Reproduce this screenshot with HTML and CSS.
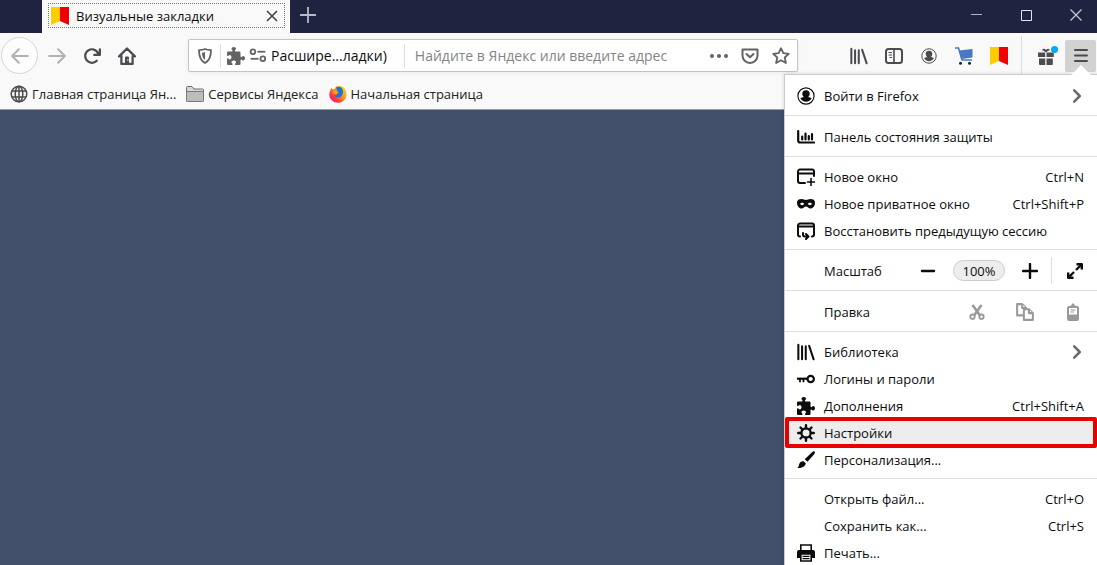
FILE: index.html
```
<!DOCTYPE html>
<html lang="ru">
<head>
    <meta charset="UTF-8">
    <title>Визуальные закладки</title>
    <link rel="stylesheet" href="styles.css">
</head>
<body>
<!-- shared icons -->
<svg class="sprite" aria-hidden="true">
    <symbol id="flag" viewBox="0 0 18 18">
        <path fill="#fc0" d="M0 0h9v14L0 18z"/>
        <path fill="#f00000" d="M9 0h9v18l-9-4z"/>
    </symbol>
    <symbol id="account" viewBox="0 0 16 16">
        <circle cx="8" cy="8" r="7.2" fill="none" stroke="currentColor"/>
        <path fill="currentColor" d="M8 2.800a3.300 3.300 0 0 0-3.300 3.300c0 1.200.5 2.200 1.300 2.800-.8.300-2 .4-3 1.200a5.600 5.600 0 0 0 10 0c-1-.8-2.200-.9-3-1.200.8-.6 1.300-1.600 1.300-2.800A3.300 3.300 0 0 0 8 2.800z"/>
    </symbol>
    <symbol id="library" viewBox="0 0 16 16">
        <path fill="none" stroke="currentColor" stroke-width="1.800" stroke-linecap="round" d="M1.200 1.500v13M4.500 3v11.500M7.800 3v11.500M10.800 2.500l4 12"/>
    </symbol>
    <symbol id="puzzle" viewBox="0 0 16 16">
        <path fill="currentColor" d="M14.5 8c-.971 0-1 1-1.75 1a.765.765 0 0 1-.75-.75V5a1 1 0 0 0-1-1H7.75A.765.765 0 0 1 7 3.25c0-.75 1-.779 1-1.75C8 .635 7.1 0 6 0S4 .635 4 1.5c0 .971 1 1 1 1.75a.765.765 0 0 1-.75.75H1a1 1 0 0 0-1 1v2.250A.765.765 0 0 0 .75 8c.75 0 .779-1 1.750-1C3.365 7 4 7.900 4 9s-.635 2-1.500 2c-.971 0-1-1-1.750-1a.765.765 0 0 0-.75.75V15a1 1 0 0 0 1 1h3.250a.765.765 0 0 0 .75-.75c0-.75-1-.779-1-1.750 0-.865.9-1.500 2-1.500s2 .635 2 1.500c0 .971-1 1-1 1.750a.765.765 0 0 0 .75.75H11a1 1 0 0 0 1-1v-3.250a.765.765 0 0 1 .75-.75c.75 0 .779 1 1.750 1 .865 0 1.500-.9 1.500-2s-.635-2-1.500-2z"/>
    </symbol>
    <symbol id="chevron" viewBox="0 0 16 16">
        <path fill="none" stroke="currentColor" stroke-width="2.200" stroke-linecap="round" stroke-linejoin="round" d="M5.500 3l5 5-5 5"/>
    </symbol>
</svg>

<header class="titlebar">
    <div class="tab">
        <div class="tab-focus">
            <svg class="icon"><use href="#flag"/></svg>
            <span class="tab-title">Визуальные закладки</span>
            <button class="tab-close" aria-label="Закрыть вкладку">
                <svg width="12" height="12" viewBox="0 0 12 12"><path stroke="#444" stroke-width="1.600" d="M1 1l10 10M11 1L1 11"/></svg>
            </button>
        </div>
    </div>
    <button class="tab-new" aria-label="Новая вкладка">
        <svg width="16" height="16" viewBox="0 0 16 16"><path stroke="#b9bac6" stroke-width="1.800" d="M8 0v16M0 8h16"/></svg>
    </button>
    <div class="win-controls">
        <button aria-label="Свернуть"><svg width="12" height="12" viewBox="0 0 12 12"><path stroke="#a9b4bd" d="M1 5.500h11"/></svg></button>
        <button aria-label="Развернуть"><svg width="12" height="12" viewBox="0 0 12 12"><path fill="none" stroke="#e4e4ea" d="M1.500 1.500h10v10h-10z"/></svg></button>
        <button aria-label="Закрыть"><svg width="12" height="12" viewBox="0 0 12 12"><path stroke="#c9c9d2" stroke-width="1.200" d="M.5.5l11 11M11.500.5l-11 11"/></svg></button>
    </div>
</header>

<nav class="toolbar">
    <button class="tool back" aria-label="Назад">
        <svg class="icon" viewBox="0 0 16 16"><path fill="none" stroke="currentColor" stroke-width="1.800" stroke-linecap="round" stroke-linejoin="round" d="M15 8H1M7 2L1 8l6 6"/></svg>
    </button>
    <button class="tool forward" aria-label="Вперёд">
        <svg class="icon" viewBox="0 0 16 16"><path fill="none" stroke="currentColor" stroke-width="1.800" stroke-linecap="round" stroke-linejoin="round" d="M1 8h14M9 2l6 6-6 6"/></svg>
    </button>
    <button class="tool" aria-label="Обновить">
        <svg class="icon" viewBox="0 0 16 16"><path fill="currentColor" d="M15 1a1 1 0 0 0-1 1v2.418A6.995 6.995 0 1 0 8 15a6.954 6.954 0 0 0 4.950-2.050 1 1 0 0 0-1.414-1.414A5.019 5.019 0 1 1 12.549 6H10a1 1 0 0 0 0 2h5a1 1 0 0 0 1-1V2a1 1 0 0 0-1-1z"/></svg>
    </button>
    <button class="tool" aria-label="Домой">
        <svg class="icon" viewBox="0 0 16 16">
            <path fill="none" stroke="currentColor" stroke-width="2" stroke-linecap="round" stroke-linejoin="round" d="M1 8.300L8 1.300l7 7M3 8v7h10V8"/>
            <path fill="currentColor" d="M6.200 15V9.500a1 1 0 0 1 1-1h1.600a1 1 0 0 1 1 1V15z"/>
            <circle cx="8.800" cy="11.500" r=".7" fill="#f9f9f9"/>
        </svg>
    </button>

    <div class="urlbar">
        <button class="url-btn shield" aria-label="Защита">
            <svg width="16" height="16" viewBox="0 0 16 16">
                <path fill="none" stroke="currentColor" stroke-width="1.800" stroke-linejoin="round" d="M8 1c2 .8 4 1 6 1.200 0 5.300-.8 10-6 12.800-5.200-2.800-6-7.500-6-12.800C4 2 6 1.800 8 1z"/>
                <path fill="currentColor" d="M8 4v8c-2.400-1.700-3-4.300-3-7.300C6.200 4.500 7 4.300 8 4z"/>
            </svg>
        </button>
        <button class="identity">
            <svg class="icon"><use href="#puzzle"/></svg>
            <svg class="icon" viewBox="0 0 16 16">
                <g fill="none" stroke="currentColor" stroke-width="1.600">
                    <circle cx="3.500" cy="4.200" r="2.100"/><path d="M7.500 4.200H14.500"/>
                    <circle cx="12.300" cy="10.500" r="2.100"/><path d="M1.500 10.500h7"/>
                </g>
            </svg>
            <span>Расшире...ладки)</span>
        </button>
        <input class="url-input" type="text" aria-label="Адресная строка" placeholder="Найдите в Яндекс или введите адрес">
        <button class="url-btn" aria-label="Действия">
            <svg class="icon" viewBox="0 0 18 18"><g fill="currentColor"><circle cx="2" cy="9" r="2"/><circle cx="9" cy="9" r="2"/><circle cx="16" cy="9" r="2"/></g></svg>
        </button>
        <button class="url-btn" aria-label="Pocket">
            <svg class="icon" viewBox="0 0 18 18">
                <g fill="none" stroke="currentColor" stroke-width="2" stroke-linecap="round" stroke-linejoin="round">
                    <path d="M1.500 2.500h15v6a7.500 7.500 0 0 1-15 0z"/><path d="M5.500 7L9 10.300 12.500 7"/>
                </g>
            </svg>
        </button>
        <button class="url-btn" aria-label="Добавить в закладки">
            <svg class="icon" viewBox="0 0 18 18"><path fill="none" stroke="currentColor" stroke-width="1.800" stroke-linejoin="round" d="M9 1.200l2.300 5 5.500.6-4.100 3.700 1.200 5.500L9 13.200 4.100 16l1.200-5.500-4.100-3.700 5.500-.6z"/></svg>
        </button>
    </div>

    <div class="tools-right">
        <button class="tool" aria-label="Библиотека"><svg class="icon"><use href="#library"/></svg></button>
        <button class="tool" aria-label="Боковые панели">
            <svg class="icon" viewBox="0 0 18 18">
                <rect x="1" y="2" width="16" height="14" rx="2.500" fill="none" stroke="currentColor" stroke-width="2"/>
                <path stroke="currentColor" stroke-width="1.600" d="M9 3v12"/>
                <path stroke="currentColor" d="M3.500 5.500H7M3.500 8H7M4.500 10.500H7"/>
            </svg>
        </button>
        <button class="tool" aria-label="Аккаунт"><svg width="16" height="16"><use href="#account"/></svg></button>
        <button class="tool" aria-label="Маркет">
            <svg class="icon" viewBox="0 0 18 18">
                <path fill="none" stroke="#4878c4" stroke-width="1.600" d="M0 1h3.500L7 13h10"/>
                <path fill="#4878c4" d="M4 3.500L17.500 2v8.500L6.500 12z"/>
                <circle cx="5.500" cy="16.300" r="1.500" fill="#222"/><circle cx="14.500" cy="16.300" r="1.500" fill="#222"/>
            </svg>
        </button>
        <button class="tool" aria-label="Визуальные закладки"><svg class="icon"><use href="#flag"/></svg></button>
    </div>
    <div class="tools-end">
        <button class="tool" aria-label="Что нового">
            <svg width="20" height="20" viewBox="0 0 20 20">
                <path fill="currentColor" d="M0 6.500h7.200V11H0zM8.500 6.500h7.300V11H8.500zM1 12.500h6.200V19H2a1 1 0 0 1-1-1zM8.500 12.500h6.300V18a1 1 0 0 1-1 1H8.500z"/>
                <path fill="none" stroke="currentColor" stroke-width="2" d="M7.900 5.800C7 3.500 5 3 5 4.500M7.900 5.800C9 4 10.500 3 11 4.500"/>
                <circle cx="16.500" cy="3.500" r="3.500" fill="#00a9f4"/>
            </svg>
        </button>
        <button class="tool menu-btn" aria-label="Открыть меню" aria-expanded="true">
            <svg class="icon" viewBox="0 0 18 18"><path stroke="currentColor" stroke-width="2" stroke-linecap="round" d="M3 3h12M3 8.500h12M3 14h12"/></svg>
        </button>
    </div>
</nav>

<div class="bookmarks">
    <a href="#">
        <svg class="icon" viewBox="0 0 18 18">
            <g fill="none" stroke="#4a4a4f" stroke-width="1.500">
                <circle cx="9" cy="9" r="7.800"/><ellipse cx="9" cy="9" rx="3.800" ry="7.800"/>
                <path d="M9 1v16M2 6h14M2 12h14"/>
            </g>
        </svg>
        Главная страница Ян...
    </a>
    <a href="#">
        <svg class="icon" viewBox="0 0 18 18">
            <path fill="#d6d6d6" stroke="#6d6d6d" stroke-linejoin="round" d="M.5 15.500v-13a1 1 0 0 1 1-1H6l2 2.500h8.500a1 1 0 0 1 1 1v10.500a1 1 0 0 1-1 1h-15a1 1 0 0 1-1-1z"/>
            <path fill="#bcbcbc" stroke="#7a7a7a" d="M.5 6.500h17v9a1 1 0 0 1-1 1h-15a1 1 0 0 1-1-1z"/>
        </svg>
        Сервисы Яндекса
    </a>
    <a href="#">
        <svg class="icon" viewBox="0 0 18 18">
            <defs>
                <linearGradient id="fire" x1="1" y1="0" x2="0" y2="1">
                    <stop offset="0" stop-color="#ffe226"/><stop offset=".4" stop-color="#ff9a1c"/>
                    <stop offset=".7" stop-color="#ff3647"/><stop offset="1" stop-color="#e31587"/>
                </linearGradient>
            </defs>
            <path fill="url(#fire)" d="M2.500 3l1 1.500L5.500 4 7 1.500C11 .3 15 1 16.500 5c1.200 2 1.300 5 .5 7.500-1.500 3.500-4.500 5.300-8 5.300C4 17.800.3 14 .3 9.500c0-2.500 1-5 2.200-6.500z"/>
            <path fill="#1477d8" d="M7 2.500c3.500-1.800 6.500.5 7 3.500.4 3.500-1.500 6.500-5 6.500C7 12.500 5.500 11.500 5 10c1.500.8 3 0 3.500-1L6 7.500l2-1.500z"/>
            <path fill="#ff9a1c" d="M4 5.500L7 4l1.500 2.500L10 7.500 7.500 9 4.500 9z"/>
        </svg>
        Начальная страница
    </a>
</div>

<main class="page"></main>

<div class="menu">
    <div class="group single">
        <button class="item">
            <svg class="icon"><use href="#account"/></svg>
            <span>Войти в Firefox</span>
            <svg class="icon arrow"><use href="#chevron"/></svg>
        </button>
    </div>
    <div class="group single">
        <button class="item">
            <svg class="icon" viewBox="0 0 18 18"><path fill="none" stroke="currentColor" stroke-width="2.200" stroke-linecap="round" d="M1.200 3v9.500a2 2 0 0 0 2 2H17M5.200 8.500v3M8.500 5.500v6M11.800 8v3.500M15 6v5.500"/></svg>
            <span>Панель состояния защиты</span>
        </button>
    </div>
    <div class="group">
        <button class="item">
            <svg class="icon" viewBox="0 0 18 18">
                <g fill="none" stroke="currentColor" stroke-width="2" stroke-linecap="round">
                    <path d="M8 15H3a2 2 0 0 1-2-2V3.500a2 2 0 0 1 2-2h12a2 2 0 0 1 2 2V8M2 5.500h14"/>
                    <path stroke-width="1.600" d="M14 10.500v7M10.500 14h7"/>
                </g>
            </svg>
            <span>Новое окно</span>
            <kbd>Ctrl+N</kbd>
        </button>
        <button class="item">
            <svg class="icon" viewBox="0 0 18 18">
                <path fill="currentColor" fill-rule="evenodd" d="M4.500 4C6.500 4 7.500 5 9 5s2.500-1 4.500-1C16 4 18 5 18 7.500c0 3.500-2 6-4.500 6-2 0-3-2-4.500-2s-2.500 2-4.500 2C2 13.500 0 11 0 7.500 0 5 2 4 4.500 4zM3 9c1 1.500 3.300 1.500 4.300 0C6.300 7.300 4 7.300 3 9zm7.700 0c1 1.500 3.300 1.500 4.300 0-1-1.700-3.300-1.700-4.300 0z"/>
            </svg>
            <span>Новое приватное окно</span>
            <kbd>Ctrl+Shift+P</kbd>
        </button>
        <button class="item">
            <svg class="icon" viewBox="0 0 18 18">
                <g fill="none" stroke="currentColor" stroke-width="2" stroke-linecap="round" stroke-linejoin="round">
                    <path d="M3 14.500a2 2 0 0 1-2-2v-9a2 2 0 0 1 2-2h12a2 2 0 0 1 2 2v9a2 2 0 0 1-2 2M2 4.500h14"/>
                    <path d="M6 11v1.500a2 2 0 0 0 2 2h3M9 12l2.500 2.500L9 17"/>
                </g>
            </svg>
            <span>Восстановить предыдущую сессию</span>
        </button>
    </div>
    <div class="group single">
        <div class="item controls">
            <span>Масштаб</span>
            <button class="zoom-btn" aria-label="Уменьшить"><svg width="16" height="16" viewBox="0 0 16 16"><path stroke="currentColor" stroke-width="2.400" stroke-linecap="round" d="M2 8h12"/></svg></button>
            <button class="zoom-value">100%</button>
            <button class="zoom-btn" aria-label="Увеличить"><svg width="16" height="16" viewBox="0 0 16 16"><path stroke="currentColor" stroke-width="2.400" stroke-linecap="round" d="M1 8h14M8 1v14"/></svg></button>
            <button class="fullscreen" aria-label="Полный экран">
                <svg width="16" height="16" viewBox="0 0 16 16">
                    <path stroke="currentColor" stroke-width="2.400" d="M9 7l5-5M7 9l-5 5"/>
                    <path fill="none" stroke="currentColor" stroke-width="2.400" stroke-linejoin="round" d="M9.500 1.200h5.300v5.300M1.200 9.500v5.300h5.300"/>
                </svg>
            </button>
        </div>
    </div>
    <div class="group single">
        <div class="item controls">
            <span>Правка</span>
            <button class="edit-btn" aria-label="Вырезать" disabled>
                <svg width="16" height="16" viewBox="0 0 16 16">
                    <g fill="none" stroke="currentColor"><circle cx="3.500" cy="12.700" r="2.200" stroke-width="1.800"/><circle cx="12.500" cy="12.700" r="2.200" stroke-width="1.800"/><path stroke-width="2.600" d="M3.500 1l7.500 10.500M12.500 1L5 11.500"/></g>
                </svg>
            </button>
            <button class="edit-btn" aria-label="Копировать" disabled>
                <svg width="18" height="18" viewBox="0 0 16 16">
                    <g fill="#fff" stroke="currentColor" stroke-width="1.800" stroke-linejoin="round"><path d="M1 1h4.500L9 4.500V11H1z"/><path d="M5.500 1v3.500H9"/><path d="M7 5.500h4.500L15 9v6H7z"/><path d="M11.500 5.500V9H15"/></g>
                </svg>
            </button>
            <button class="edit-btn" aria-label="Вставить" disabled>
                <svg width="16" height="18" viewBox="0 0 16 18">
                    <rect x="2" y="3" width="12" height="15" rx="2" fill="currentColor"/>
                    <path fill="currentColor" d="M8 0l3 3.500H5z"/>
                    <path fill="#fff" d="M4 5h8v6.500H4z"/>
                    <path stroke="currentColor" d="M5.500 7h5M5.500 9h3.500"/>
                </svg>
            </button>
        </div>
    </div>
    <div class="group">
        <button class="item">
            <svg class="icon"><use href="#library"/></svg>
            <span>Библиотека</span>
            <svg class="icon arrow"><use href="#chevron"/></svg>
        </button>
        <button class="item">
            <svg class="icon" viewBox="0 0 18 18">
                <circle cx="13.700" cy="9" r="3.200" fill="none" stroke="currentColor" stroke-width="2.200"/>
                <path fill="none" stroke="currentColor" stroke-width="2.200" d="M10.500 8.700H0"/>
                <path fill="none" stroke="currentColor" stroke-width="1.800" d="M3 8.500v3.700M6.500 8.500v3.700"/>
            </svg>
            <span>Логины и пароли</span>
        </button>
        <button class="item">
            <svg class="icon"><use href="#puzzle"/></svg>
            <span>Дополнения</span>
            <kbd>Ctrl+Shift+A</kbd>
        </button>
        <button class="item active">
            <svg class="icon" viewBox="0 0 18 18">
                <circle cx="9" cy="9" r="4.700" fill="none" stroke="currentColor" stroke-width="2.200"/>
                <path stroke="currentColor" stroke-width="2.400" stroke-linecap="round" d="M9 1.200v3M9 13.800v3M1.200 9h3M13.800 9h3M3.500 3.500l2 2M12.500 12.500l2 2M3.500 14.500l2-2M12.500 5.500l2-2"/>
            </svg>
            <span>Настройки</span>
        </button>
        <button class="item">
            <svg class="icon" viewBox="0 0 18 18"><path fill="currentColor" d="M17.500.5c.8.8.4 1.800-.3 2.700l-6.700 7.600-2.800-2.500L15 1.200c.8-.8 1.800-1.300 2.500-.7zM6.500 10.200l2.300 2.100C8.500 15.500 4.500 17.500 0 17c2-1 1.500-2 2.300-4.300.8-1.900 2.500-2.700 4.200-2.500z"/></svg>
            <span>Персонализация...</span>
        </button>
    </div>
    <div class="group">
        <button class="item"><span class="no-icon">Открыть файл...</span><kbd>Ctrl+O</kbd></button>
        <button class="item"><span class="no-icon">Сохранить как...</span><kbd>Ctrl+S</kbd></button>
        <button class="item">
            <svg class="icon" viewBox="0 0 18 18">
                <path fill="none" stroke="currentColor" stroke-width="1.600" d="M3.800 6V1h10.400v5"/>
                <path fill="currentColor" d="M2 6h14a2 2 0 0 1 2 2v6h-3v-4H3v4H0V8a2 2 0 0 1 2-2z"/>
                <path fill="#fff" stroke="currentColor" stroke-width="1.600" d="M3.800 10h10.400v7H3.800z"/>
                <path stroke="currentColor" stroke-width="1.300" d="M5.500 12.300h7M5.500 14.600h7"/>
            </svg>
            <span>Печать...</span>
        </button>
    </div>
</div>
</body>
</html>
```
FILE: styles.css
```
* {
    box-sizing: border-box;
}

body {
    display: flex;
    flex-direction: column;
    margin: 0;
    height: 100vh;
    overflow: hidden;
    background: #424f6b;
    font: 13px/18px "Open Sans", "Noto Sans", sans-serif;
    color: #0c0c0d;
}

button {
    display: flex;
    align-items: center;
    justify-content: center;
    margin: 0;
    padding: 0;
    border: none;
    background: none;
    font: inherit;
    color: inherit;
}

svg {
    display: block;
    flex: none;
}

.sprite {
    position: absolute;
    width: 0;
    height: 0;
}

.icon {
    width: 18px;
    height: 18px;
}

/* tabs */
.titlebar {
    display: flex;
    flex: none;
    height: 33px;
    padding-left: 42px;
    background: #202340;
}

.tab {
    width: 248px;
    padding: 3px 5px 5px 6px;
    background: #f9f9f9;
}

.tab-focus {
    display: flex;
    align-items: center;
    height: 25px;
    padding: 0 6px 0 2px;
    border: 1px dotted #777;
}

.tab-title {
    flex: 1;
    margin-left: 7px;
    white-space: nowrap;
}

.tab-new {
    width: 36px;
    height: 30px;
}

.win-controls {
    display: flex;
    gap: 8px;
    margin-left: auto;
}

.win-controls button {
    width: 42px;
    height: 30px;
}

/* navigation */
.toolbar {
    display: flex;
    flex: none;
    align-items: center;
    height: 45px;
    background: #f9f9f9;
    color: #4c4c50;
}

.tool {
    width: 35px;
    height: 32px;
    border-radius: 2px;
}

.back {
    width: 37px;
    height: 37px;
    margin: 0 1px;
    border: 1px solid #d5d5d5;
    border-radius: 50%;
    background: #fdfdfd;
}

.back,
.forward {
    color: #b2b2b4;
}

.urlbar {
    display: flex;
    flex: 1;
    align-items: center;
    height: 33px;
    margin-left: 44px;
    padding-right: 1px;
    border: 1px solid #c4c4c4;
    border-radius: 2px;
    background: #fff;
    box-shadow: 0 1px 4px rgba(0, 0, 0, .06);
    font-size: 14px;
    color: #636366;
}

.url-btn {
    width: 31px;
    height: 24px;
}

.identity {
    gap: 4px;
    height: 24px;
    padding: 0 17px 0 6px;
    border: solid #ddd;
    border-width: 0 1px;
    white-space: nowrap;
}

.identity span {
    color: #0c0c0d;
}

.url-input {
    flex: 1;
    min-width: 0;
    padding: 0 10px;
    border: none;
    outline: none;
    background: none;
    font: inherit;
}

.url-input::placeholder {
    color: #858585;
    opacity: 1;
}

.tools-right {
    display: flex;
    padding: 0 5px 0 43px;
}

.tools-end {
    display: flex;
    align-items: center;
    height: 40px;
    padding: 0 1px 0 8px;
    border-left: 1px solid #ddd;
}

.menu-btn {
    width: 31px;
    background: #d2d2d3;
}

/* bookmarks bar */
.bookmarks {
    display: flex;
    flex: none;
    align-items: center;
    gap: 10px;
    height: 31px;
    padding-left: 10px;
    background: #f9f9f9;
}

.bookmarks a {
    display: flex;
    align-items: center;
    gap: 4px;
    color: #222;
    text-decoration: none;
    white-space: nowrap;
}

.page {
    flex: 1;
    border-top: 1px solid #9a9da6;
}

/* main menu */
.menu {
    position: absolute;
    top: 74px;
    right: 0;
    bottom: 0;
    width: 313px;
    border: 1px solid #ccc;
    border-width: 1px 0 0 1px;
    background: #fff;
    box-shadow: 0 0 4px rgba(0, 0, 0, .15);
}

.menu::before {
    content: "";
    position: absolute;
    top: -10px;
    right: 6px;
    border: solid transparent;
    border-width: 0 10px 10px;
    border-bottom-color: #fff;
}

.group {
    padding: 6px 0 5px;
    border-bottom: 1px solid #dedede;
}

.group:last-child {
    border-bottom: none;
}

.item {
    position: relative;
    display: flex;
    align-items: center;
    justify-content: flex-start;
    gap: 9px;
    width: 100%;
    height: 27px;
    padding: 0 13px 0 12px;
    white-space: nowrap;
}

.single .item {
    height: 29px;
}

.item kbd,
.item .arrow {
    margin-left: auto;
}

.item kbd {
    font: inherit;
}

.arrow {
    margin-right: -2px;
    color: #6a6a6a;
}

.no-icon {
    padding-left: 27px;
}

.active {
    background: #ededed;
}

/* red frame round the highlighted item */
.active::after {
    content: "";
    position: absolute;
    top: -2px;
    right: 0;
    bottom: -2px;
    left: 0;
    border: 4px solid #e60000;
    border-radius: 2px;
}

.controls {
    gap: 0;
    padding: 0 0 0 39px;
}

.controls span {
    margin-right: auto;
}

.zoom-btn {
    width: 50px;
    height: 26px;
}

.zoom-value {
    width: 52px;
    height: 21px;
    border: 1px solid #ccc;
    border-radius: 11px;
    background: #ededed;
}

.fullscreen {
    width: 46px;
    height: 27px;
    border-left: 1px solid #dedede;
}

.zoom-btn + .fullscreen {
    margin-left: -4px;
}

.edit-btn {
    width: 48px;
    height: 26px;
    color: #999;
}
```
